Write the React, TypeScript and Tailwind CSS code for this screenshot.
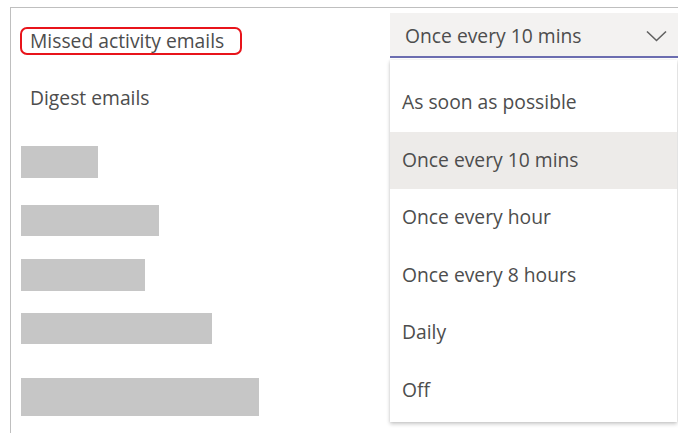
import React from "react";

const options = [
  "As soon as possible",
  "Once every 10 mins",
  "Once every hour",
  "Once every 8 hours",
  "Daily",
  "Off",
];

// placeholder rows under the two labels, widths/heights in px
const skeletonRows = [
  { w: "w-[77px]", h: "h-[32px]", mt: "mt-[34px]" },
  { w: "w-[138px]", h: "h-[31px]", mt: "mt-[27px]" },
  { w: "w-[124px]", h: "h-[32px]", mt: "mt-[23px]" },
  { w: "w-[191px]", h: "h-[31px]", mt: "mt-[22px]" },
  { w: "w-[238px]", h: "h-[38px]", mt: "mt-[34px]" },
];

function ChevronDown() {
  return (
    <svg width="21" height="12" viewBox="0 0 21 12" fill="none">
      <path d="M1 1.5 L10.5 10.5 L20 1.5" stroke="#616161" strokeWidth="1.6" />
    </svg>
  );
}

export default function App() {
  const selected = "Once every 10 mins";

  return (
    <div className="w-[678px] h-[433px] bg-white overflow-hidden pt-[7px] pl-[10px] font-['Open_Sans',sans-serif] text-[#4d4d4d]">
      <div className="flex h-full border-t border-l border-[#bfbfbf]">
        {/* labels + placeholders */}
        <div className="w-[379px] shrink-0 pt-[19px] pl-[9px] flex flex-col items-start">
          <div className="h-[28px] flex items-center pl-[8px] pr-[16px] border-2 border-[#e8141b] rounded-[7px] text-[19.3px] leading-none">
            Missed activity emails
          </div>
          <div className="mt-[29px] pl-[10px] text-[19.3px] leading-none h-[28px] flex items-center">Digest emails</div>
          {skeletonRows.map((r, i) => (
            <div key={i} className={`${r.w} ${r.h} ${r.mt} ml-px bg-[#c6c6c6]`} />
          ))}
        </div>

        {/* frequency dropdown */}
        <div className="flex-1 pt-[5px]">
          <div className="relative">
            <div className="h-[45px] bg-[#f3f2f1] border-b-2 border-[#6b6db0] flex items-center justify-between pl-[15px] pr-[11px] pt-[2px] text-[19.3px]">
              <span className="leading-none">{selected}</span>
              <ChevronDown />
            </div>
            <div className="absolute left-0 right-px top-[47px] h-[362px] bg-white pt-[14px] pb-[3px] shadow-[0_2px_4px_rgba(0,0,0,0.22),0_0_2px_rgba(0,0,0,0.08)]">
              {options.map((o) => (
                <div
                  key={o}
                  className={`h-[57.5px] flex items-center pl-[12px] text-[19.3px] ${
                    o === selected ? "bg-[#edebe9]" : ""
                  }`}
                >
                  {o}
                </div>
              ))}
            </div>
          </div>
        </div>
      </div>
    </div>
  );
}
